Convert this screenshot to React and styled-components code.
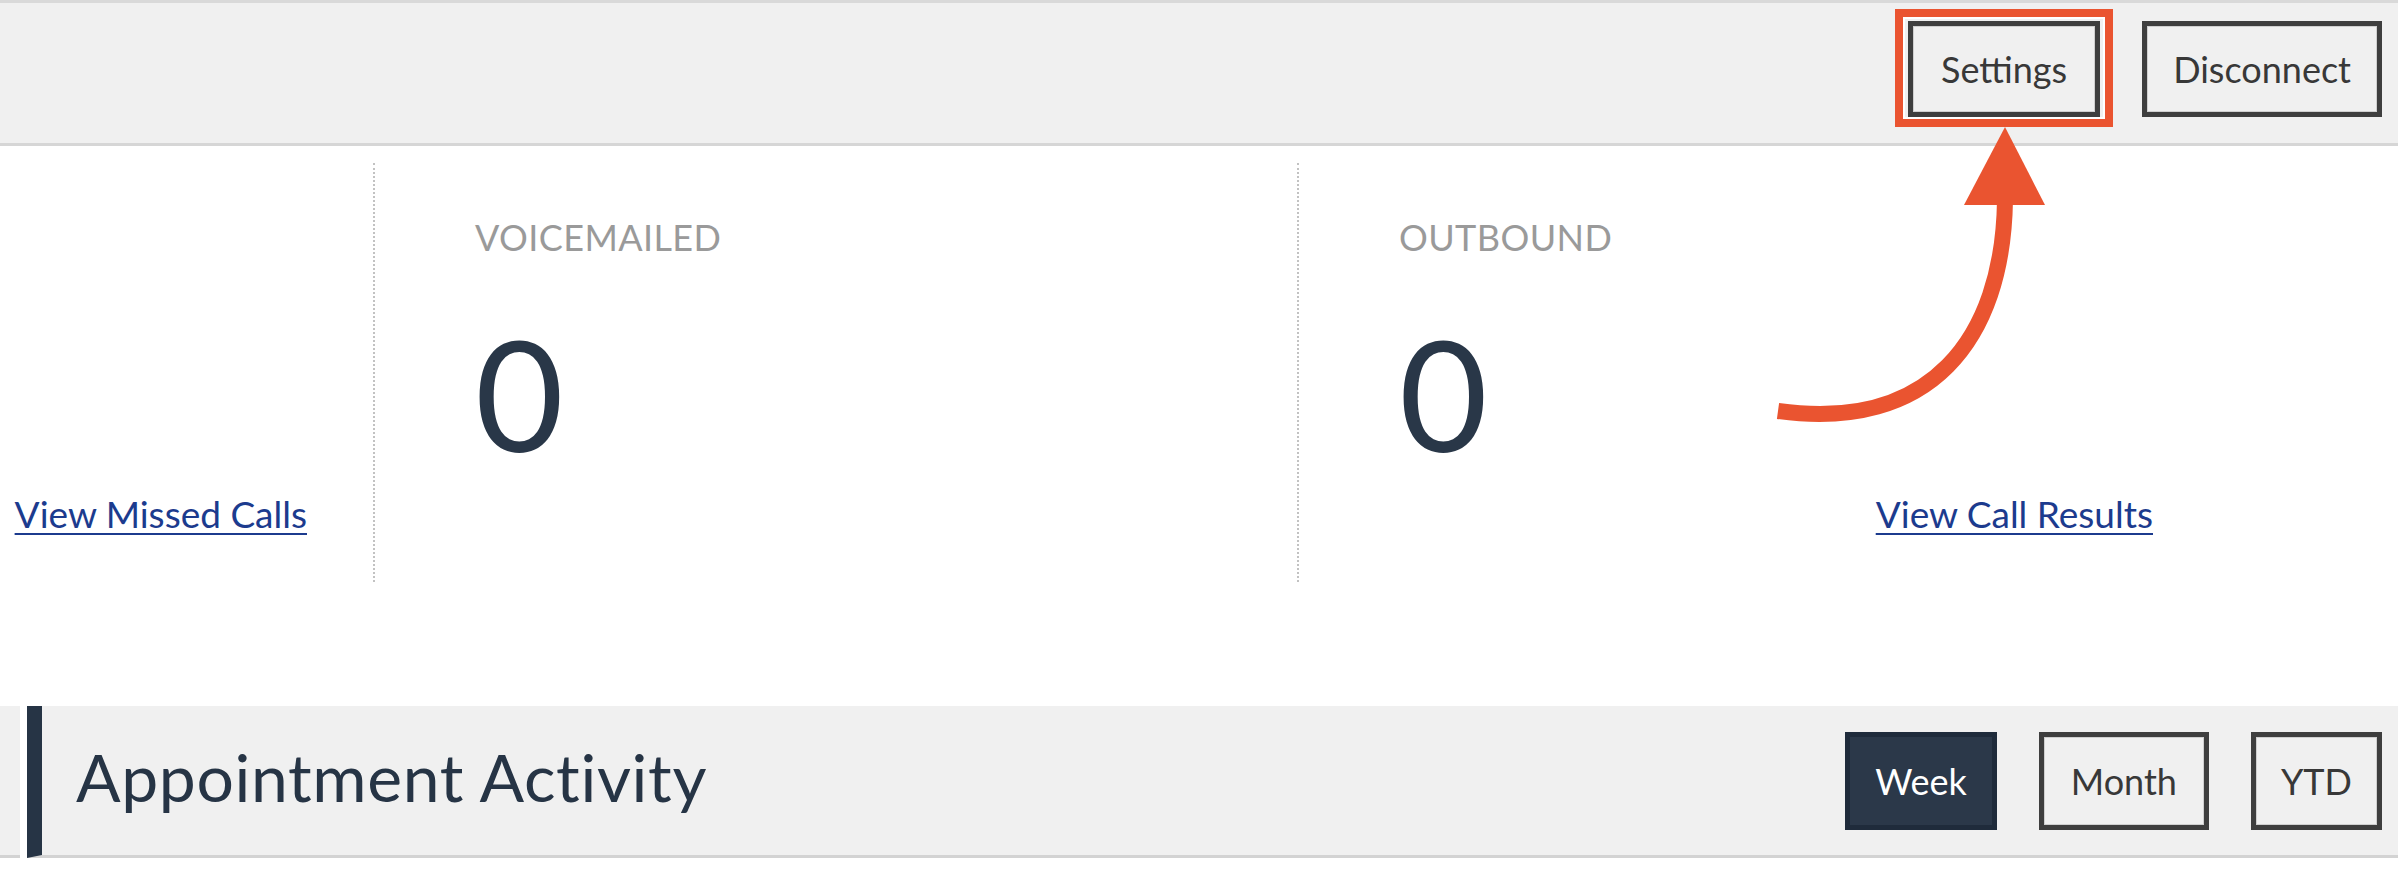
import React from "react";
import styled, { createGlobalStyle } from "styled-components";

const GlobalStyle = createGlobalStyle`
  html, body { margin: 0; padding: 0; background: #ffffff; }
  body { font-family: Lato, "Noto Sans", "DejaVu Sans", sans-serif; overflow: hidden; }
  * { box-sizing: border-box; }
`;

const Page = styled.div`
  position: relative;
  width: 2398px;
  height: 872px;
  background: #ffffff;
`;

const TopBar = styled.header`
  display: flex;
  justify-content: flex-end;
  align-items: flex-start;
  gap: 42px;
  height: 146px;
  padding: 18px 16px 0 0;
  background: #f0f0f0;
  border-top: 3px solid #d9d9d9;
  border-bottom: 3px solid #d6d6d6;
`;

const OutlineButton = styled.button`
  height: ${(p) => p.$h}px;
  padding: 0 ${(p) => p.$pad}px;
  font-family: Lato, "Noto Sans", sans-serif;
  font-size: 36px;
  font-weight: 400;
  white-space: nowrap;
  color: ${(p) => (p.$active ? "#ffffff" : "#383838")};
  background: ${(p) => (p.$active ? "#2b3849" : "#f0f0f0")};
  border: 5px solid ${(p) => (p.$active ? "#1f2b3b" : "#3e3e3e")};
  box-shadow: ${(p) => (p.$active ? "none" : "inset 0 0 0 1px #cfcfcf")};
  border-radius: 0;
  cursor: pointer;
  line-height: 1;
`;

const HighlightWrap = styled.div`
  position: relative;
  display: flex;
`;

const Highlight = styled.span`
  position: absolute;
  top: -12px;
  left: -13px;
  right: -13px;
  bottom: -10px;
  border: 8px solid #ea5430;
  box-shadow: inset 0 0 0 2px #ffffff;
  pointer-events: none;
`;

const Stats = styled.section`
  display: grid;
  grid-template-columns: 373px 924px 922px 1fr;
  margin-top: 17px;
`;

const Column = styled.div`
  display: flex;
  flex-direction: column;
  height: 419px;
  padding: 56px 66px 50px ${(p) => (p.$first ? 0 : 100)}px;
  border-left: ${(p) => (p.$divider ? "2px dotted #c2c2c2" : "none")};
`;

const Label = styled.div`
  height: 36px;
  margin-bottom: 62px;
  font-size: 36px;
  line-height: 36px;
  color: #9a9a9a;
  letter-spacing: 0.4px;
  text-transform: uppercase;
`;

const Value = styled.div`
  height: 153px;
  margin-bottom: 26px;
  font-size: 153px;
  line-height: 153px;
  color: #293748;
`;

const LinkRow = styled.div`
  height: 36px;
  display: flex;
  justify-content: flex-end;
`;

const StatLink = styled.a`
  font-size: 37px;
  line-height: 36px;
  white-space: nowrap;
  color: #1c3b8e;
  text-decoration: underline;
  text-decoration-thickness: 2px;
  text-underline-offset: 5px;
  cursor: pointer;
`;

const SectionRow = styled.section`
  display: flex;
  margin-top: 124px;
`;

const Stub = styled.div`
  width: 20px;
  height: 152px;
  background: #f0f0f0;
  border-bottom: 3px solid #d3d3d3;
  margin-right: 7px;
`;

const SectionHeader = styled.div`
  flex: 1;
  display: flex;
  align-items: center;
  height: 152px;
  padding: 26px 16px 25px 34px;
  background: #f0f0f0;
  border-left: 15px solid #263445;
  border-bottom: 3px solid #d3d3d3;
`;

const Title = styled.h2`
  flex: 1;
  margin: 0 0 8px 0;
  font-size: 66px;
  font-weight: 400;
  line-height: 66px;
  letter-spacing: 0.65px;
  color: #263445;
`;

const Toggle = styled.div`
  display: flex;
  gap: 42px;
`;

const Arrow = styled.svg`
  position: absolute;
  left: 1740px;
  top: 120px;
  width: 320px;
  height: 320px;
  pointer-events: none;
`;

const stats = [
  { label: "", value: "", link: "View Missed Calls", first: true },
  { label: "Voicemailed", value: "0", link: "", divider: true },
  { label: "Outbound", value: "0", link: "View Call Results", divider: true },
];

export default function App() {
  return (
    <Page>
      <GlobalStyle />
      <TopBar>
        <HighlightWrap>
          <OutlineButton $h={96} $pad={28}>Settings</OutlineButton>
          <Highlight />
        </HighlightWrap>
        <OutlineButton $h={96} $pad={26}>Disconnect</OutlineButton>
      </TopBar>

      <Stats>
        {stats.map((s, i) => (
          <Column key={i} $first={s.first} $divider={s.divider}>
            <Label>{s.label}</Label>
            <Value>{s.value}</Value>
            <LinkRow>{s.link && <StatLink>{s.link}</StatLink>}</LinkRow>
          </Column>
        ))}
        <div />
      </Stats>

      <SectionRow>
        <Stub />
        <SectionHeader>
          <Title>Appointment Activity</Title>
          <Toggle>
            <OutlineButton $h={98} $pad={25} $active>Week</OutlineButton>
            <OutlineButton $h={98} $pad={27}>Month</OutlineButton>
            <OutlineButton $h={98} $pad={25}>YTD</OutlineButton>
          </Toggle>
        </SectionHeader>
      </SectionRow>

      <Arrow viewBox="1740 120 320 320">
        <path
          d="M 1778 411 C 1930 432, 2003 340, 2005 200"
          fill="none"
          stroke="#ea5430"
          strokeWidth="16"
        />
        <polygon points="2005,127 1964,205 2045,205" fill="#ea5430" />
      </Arrow>
    </Page>
  );
}
